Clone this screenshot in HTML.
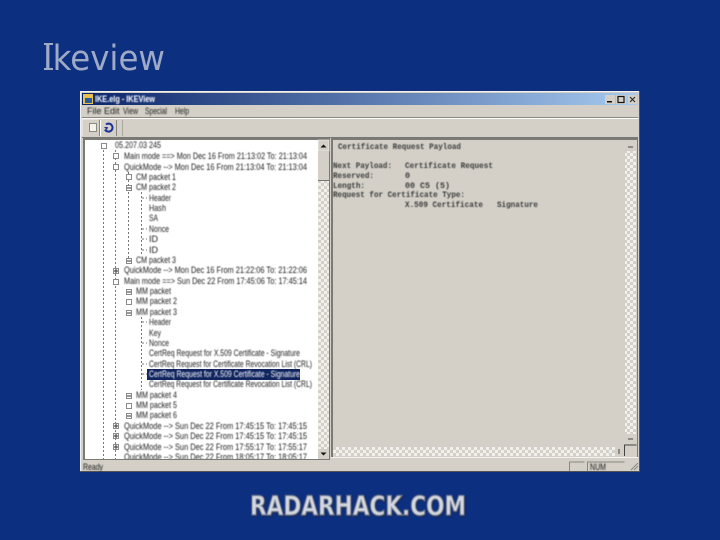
<!DOCTYPE html>
<html><head><meta charset="utf-8"><title>Ikeview</title>
<style>html,body{margin:0;padding:0;background:#0c2f80;width:720px;height:540px;overflow:hidden}svg{display:block}
.t{font-family:"Liberation Sans",sans-serif;font-size:9px;fill:#222}
.m{font-family:"Liberation Mono",monospace;font-size:8.5px;fill:#3a3a3a;font-weight:bold}
</style></head><body>
<svg width="720" height="540" viewBox="0 0 720 540" xmlns="http://www.w3.org/2000/svg">
<defs>
<linearGradient id="tb" x1="0" x2="1" y1="0" y2="0"><stop offset="0" stop-color="#0a246a"/><stop offset="1" stop-color="#a6caf0"/></linearGradient>
<pattern id="ck" width="6" height="6" patternUnits="userSpaceOnUse"><rect width="6" height="6" fill="#f2f0ec"/><rect width="3" height="3" fill="#d4d0c8"/><rect x="3" y="3" width="3" height="3" fill="#d4d0c8"/></pattern>
<filter id="b" x="-5%" y="-5%" width="110%" height="110%"><feGaussianBlur stdDeviation="0.45"/></filter>
<filter id="b2" x="-5%" y="-20%" width="110%" height="140%"><feGaussianBlur stdDeviation="0.6"/></filter>
<clipPath id="treeclip"><rect x="85" y="140" width="233" height="319"/></clipPath>
</defs>
<rect width="720" height="540" fill="#0c2f80"/>
<text x="43" y="70" font-family="'DejaVu Sans',sans-serif" font-size="35" fill="#9fabc6" textLength="122" lengthAdjust="spacingAndGlyphs">Ikeview</text>
<rect x="44" y="43" width="9" height="2" fill="#9fabc6"/><rect x="44" y="68" width="9" height="2" fill="#9fabc6"/>

<rect x="80" y="91" width="560" height="381" fill="#d4d0c8"/>
<rect x="80" y="91" width="560" height="1" fill="#f4f2ee"/><rect x="80" y="91" width="1" height="381" fill="#f4f2ee"/>
<rect x="639" y="91" width="1" height="381" fill="#555"/><rect x="80" y="471" width="560" height="1" fill="#555"/>
<rect x="82" y="93" width="556" height="12" fill="url(#tb)"/>
<rect x="83" y="94" width="10" height="10" fill="#e8c050"/><rect x="85" y="98" width="7" height="5" fill="#2b5a9a"/>
<g filter="url(#b)">
<text x="95" y="102" font-family="'Liberation Sans',sans-serif" font-size="9" font-weight="bold" fill="#fff" textLength="60" lengthAdjust="spacingAndGlyphs">IKE.elg - IKEView</text>
<text class="t" x="87" y="114">File</text><text class="t" x="104" y="114">Edit</text><text class="t" x="123" y="114" textLength="15" lengthAdjust="spacingAndGlyphs">View</text><text class="t" x="145" y="114" textLength="22" lengthAdjust="spacingAndGlyphs">Special</text><text class="t" x="175" y="114" textLength="14" lengthAdjust="spacingAndGlyphs">Help</text>
</g>
<rect x="605" y="95" width="10" height="9" fill="#d4d0c8"/><rect x="607" y="101" width="5" height="1.5" fill="#111"/>
<rect x="616" y="95" width="10" height="9" fill="#d4d0c8"/><rect x="618" y="96.500" width="6" height="6" fill="none" stroke="#111" stroke-width="1.200"/>
<rect x="628" y="95" width="9" height="9" fill="#d4d0c8"/><path d="M630 97l5 5M635 97l-5 5" stroke="#222" stroke-width="1"/>
<path d="M82 117.500H638" stroke="#8a8780"/><path d="M82 118.500H638" stroke="#fff"/>
<path d="M82 119h16M82 119v17" stroke="#f4f2ee" fill="none"/>
<rect x="99" y="120" width="1" height="16" fill="#88857e"/><rect x="100" y="120" width="1" height="16" fill="#fff"/>
<rect x="116" y="120" width="1" height="16" fill="#88857e"/><rect x="122" y="120" width="1" height="16" fill="#a9a69e"/>
<path d="M90.500 123.500h6v8h-7v-8z" fill="#f4f2ea" stroke="#8a8a80"/>
<path d="M106 124.500a4 4 0 1 1-1 5" fill="none" stroke="#1a2f9a" stroke-width="2"/><path d="M104 127l3 3 1-3z" fill="#1a2f9a"/>
<path d="M82 137.500H638" stroke="#777"/>

<rect x="83" y="138" width="247" height="322" fill="#7c7a74"/>
<rect x="85" y="140" width="244" height="319" fill="#fff"/>
<rect x="318" y="140" width="11" height="319" fill="url(#ck)"/>
<rect x="318" y="140" width="11" height="11" fill="#d4d0c8" stroke="#fff" stroke-width=".5"/><path d="M320.500 147.500h6l-3-3z" fill="#111"/>
<rect x="318" y="151" width="11" height="29" fill="#d4d0c8"/><rect x="318" y="180" width="11" height="1" fill="#777"/>
<rect x="318" y="449" width="11" height="10" fill="#d4d0c8"/><path d="M320.500 452.500h6l-3 3z" fill="#111"/>

<g stroke="#777" stroke-dasharray="2 2" stroke-width="1" fill="none" clip-path="url(#treeclip)">
<path d="M103.500 150V459"/><path d="M115.500 150V459"/><path d="M141.500 192V256"/><path d="M141.500 317V390"/><path d="M128.500 172V262"/>
<path d="M142 198h5M142 229h5M142 239h5M142 250h5M142 322h5M142 343h5M142 364h5M142 374h5"/>
</g>
<g stroke="#8a8a8a" fill="#fff" stroke-width="1">
<rect x="101.500" y="143.500" width="5" height="5"/>
<rect x="113.500" y="153.500" width="5" height="5"/><rect x="113.500" y="164.500" width="5" height="5"/><rect x="113.500" y="268.500" width="5" height="5"/><rect x="113.500" y="279.500" width="5" height="5"/><rect x="113.500" y="423.500" width="5" height="5"/><rect x="113.500" y="433.500" width="5" height="5"/><rect x="113.500" y="444.500" width="5" height="5"/>
<rect x="126.500" y="174.500" width="5" height="5"/><rect x="126.500" y="185.500" width="5" height="5"/><rect x="126.500" y="258.500" width="5" height="5"/><rect x="126.500" y="289.500" width="5" height="5"/><rect x="126.500" y="299.500" width="5" height="5"/><rect x="126.500" y="310.500" width="5" height="5"/><rect x="126.500" y="393.500" width="5" height="5"/><rect x="126.500" y="403.500" width="5" height="5"/><rect x="126.500" y="413.500" width="5" height="5"/>
</g>
<g stroke="#333" stroke-width="1">
<path d="M114 426h4M116 424v4M114 436h4M116 434v4M114 447h4M116 445v4M114 271h4M116 269v4"/>
<path d="M127 188h4M127 261h4M127 292h4M127 313h4M127 396h4M127 416h4"/>
</g>
<rect x="147" y="369" width="153" height="11" fill="#10245f"/>
<g filter="url(#b)" clip-path="url(#treeclip)">
<text class="t" x="115" y="148" textLength="46" lengthAdjust="spacingAndGlyphs">05.207.03 245</text>
<text class="t" x="124" y="159" textLength="183" lengthAdjust="spacingAndGlyphs">Main mode ==&gt; Mon Dec 16 From 21:13:02 To: 21:13:04</text>
<text class="t" x="124" y="170" textLength="183" lengthAdjust="spacingAndGlyphs">QuickMode --&gt; Mon Dec 16 From 21:13:04 To: 21:13:04</text>
<text class="t" x="136" y="180" textLength="40" lengthAdjust="spacingAndGlyphs">CM packet 1</text>
<text class="t" x="136" y="190" textLength="40" lengthAdjust="spacingAndGlyphs">CM packet 2</text>
<text class="t" x="149" y="201" textLength="22" lengthAdjust="spacingAndGlyphs">Header</text>
<text class="t" x="149" y="211" textLength="17" lengthAdjust="spacingAndGlyphs">Hash</text>
<text class="t" x="149" y="221" textLength="9" lengthAdjust="spacingAndGlyphs">SA</text>
<text class="t" x="149" y="232" textLength="20" lengthAdjust="spacingAndGlyphs">Nonce</text>
<text class="t" x="149" y="242">ID</text>
<text class="t" x="149" y="253">ID</text>
<text class="t" x="136" y="263" textLength="40" lengthAdjust="spacingAndGlyphs">CM packet 3</text>
<text class="t" x="124" y="273" textLength="183" lengthAdjust="spacingAndGlyphs">QuickMode --&gt; Mon Dec 16 From 21:22:06 To: 21:22:06</text>
<text class="t" x="124" y="284" textLength="183" lengthAdjust="spacingAndGlyphs">Main mode ==&gt; Sun Dec 22 From 17:45:06 To: 17:45:14</text>
<text class="t" x="136" y="294" textLength="35" lengthAdjust="spacingAndGlyphs">MM packet</text>
<text class="t" x="136" y="304" textLength="41" lengthAdjust="spacingAndGlyphs">MM packet 2</text>
<text class="t" x="136" y="315" textLength="41" lengthAdjust="spacingAndGlyphs">MM packet 3</text>
<text class="t" x="149" y="325" textLength="22" lengthAdjust="spacingAndGlyphs">Header</text>
<text class="t" x="149" y="336" textLength="12" lengthAdjust="spacingAndGlyphs">Key</text>
<text class="t" x="149" y="346" textLength="20" lengthAdjust="spacingAndGlyphs">Nonce</text>
<text class="t" x="149" y="356" textLength="151" lengthAdjust="spacingAndGlyphs">CertReq Request for X.509 Certificate - Signature</text>
<text class="t" x="149" y="367" textLength="163" lengthAdjust="spacingAndGlyphs">CertReq Request for Certificate Revocation List (CRL)</text>
<text class="t" x="149" y="377" textLength="151" lengthAdjust="spacingAndGlyphs" style="fill:#fff">CertReq Request for X.509 Certificate - Signature</text>
<text class="t" x="149" y="387" textLength="163" lengthAdjust="spacingAndGlyphs">CertReq Request for Certificate Revocation List (CRL)</text>
<text class="t" x="136" y="398" textLength="41" lengthAdjust="spacingAndGlyphs">MM packet 4</text>
<text class="t" x="136" y="408" textLength="41" lengthAdjust="spacingAndGlyphs">MM packet 5</text>
<text class="t" x="136" y="418" textLength="41" lengthAdjust="spacingAndGlyphs">MM packet 6</text>
<text class="t" x="124" y="429" textLength="183" lengthAdjust="spacingAndGlyphs">QuickMode --&gt; Sun Dec 22 From 17:45:15 To: 17:45:15</text>
<text class="t" x="124" y="439" textLength="183" lengthAdjust="spacingAndGlyphs">QuickMode --&gt; Sun Dec 22 From 17:45:15 To: 17:45:15</text>
<text class="t" x="124" y="450" textLength="183" lengthAdjust="spacingAndGlyphs">QuickMode --&gt; Sun Dec 22 From 17:55:17 To: 17:55:17</text>
<text class="t" x="124" y="460" textLength="183" lengthAdjust="spacingAndGlyphs">QuickMode --&gt; Sun Dec 22 From 18:05:17 To: 18:05:17</text>
</g>

<rect x="331" y="138" width="307" height="320" fill="#7c7a74"/>
<rect x="333" y="140" width="304" height="317" fill="#d4d0c8"/>
<rect x="625" y="140" width="11" height="305" fill="url(#ck)"/>
<rect x="625" y="140" width="11" height="11" fill="#d4d0c8"/><path d="M628 147h5" stroke="#444"/>
<rect x="625" y="434" width="11" height="11" fill="#d4d0c8"/><path d="M628 439h5" stroke="#444"/>
<rect x="333" y="447" width="282" height="9" fill="url(#ck)"/>
<rect x="615" y="447" width="9" height="9" fill="#d4d0c8"/><path d="M619 449v5" stroke="#444"/>
<path d="M624.500 456v-11h12" fill="none" stroke="#444"/>
<path d="M331 457.500H638" stroke="#f4f2ee"/>
<g filter="url(#b)">
<text class="m" x="338" y="149" textLength="123" lengthAdjust="spacingAndGlyphs">Certificate Request Payload</text>
<text class="m" x="333" y="168" textLength="59" lengthAdjust="spacingAndGlyphs">Next Payload:</text><text class="m" x="405" y="168" textLength="88" lengthAdjust="spacingAndGlyphs">Certificate Request</text>
<text class="m" x="333" y="178" textLength="41" lengthAdjust="spacingAndGlyphs">Reserved:</text><text class="m" x="405" y="178">0</text>
<text class="m" x="333" y="188" textLength="32" lengthAdjust="spacingAndGlyphs">Length:</text><text class="m" x="405" y="188" textLength="45" lengthAdjust="spacingAndGlyphs">00 C5 (5)</text>
<text class="m" x="333" y="197" textLength="132" lengthAdjust="spacingAndGlyphs">Request for Certificate Type:</text>
<text class="m" x="405" y="207" textLength="78" lengthAdjust="spacingAndGlyphs">X.509 Certificate</text><text class="m" x="497" y="207" textLength="41" lengthAdjust="spacingAndGlyphs">Signature</text>
<text class="t" x="83" y="470" textLength="20" lengthAdjust="spacingAndGlyphs">Ready</text>
<text class="t" x="590" y="470" textLength="16" lengthAdjust="spacingAndGlyphs">NUM</text>
</g>
<path d="M569.500 471v-9h15M587.500 471v-9h37" fill="none" stroke="#8a8780"/>
<path d="M631 470l7-7M634 470l4-4" stroke="#888"/>

<g font-family="'DejaVu Sans',sans-serif" font-weight="bold" font-size="27">
<text x="251" y="516" fill="#1c2a50" stroke="#1c2a50" stroke-width="1.500" textLength="216" lengthAdjust="spacingAndGlyphs" filter="url(#b2)">RADARHACK.COM</text>
<text x="250" y="515" fill="#d6d9e0" stroke="#6f7890" stroke-width="1.200" textLength="216" lengthAdjust="spacingAndGlyphs" filter="url(#b)">RADARHACK.COM</text>
</g>
</svg>
</body></html>
